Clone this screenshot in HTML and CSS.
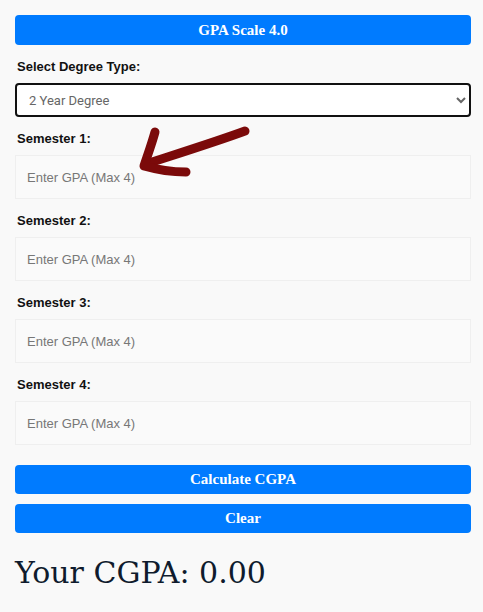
FILE: index.html
```html
<!DOCTYPE html>
<html lang="en">

<head>
    <meta charset="utf-8">
    <meta name="viewport" content="width=device-width, initial-scale=1.0">
    <title>CGPA Calculator</title>
    <link rel="stylesheet" href="styles.css">
</head>

<body>
    <div class="container">
        <button class="knap top">GPA Scale 4.0</button>

        <label class="label first" for="degree">Select Degree Type:</label>
        <select id="degree" class="degree">
            <option>2 Year Degree</option>
            <option>4 Year Degree</option>
        </select>

        <div class="semestre">
            <label class="label" for="s1">Semester 1:</label>
            <input id="s1" class="gpa" type="text" placeholder="Enter GPA (Max 4)">
            <svg class="pil" width="130" height="70" viewBox="0 0 130 70">
                <path d="M112 17 C 85 27, 50 38, 13 50" fill="none" stroke="#7b0a0a" stroke-width="9" stroke-linecap="round"/>
                <path d="M22 18 C 19 29, 15 40, 11 52 C 25 56, 38 58, 53 58" fill="none" stroke="#7b0a0a" stroke-width="9" stroke-linecap="round" stroke-linejoin="round"/>
            </svg>
        </div>
        <div class="semestre">
            <label class="label" for="s2">Semester 2:</label>
            <input id="s2" class="gpa" type="text" placeholder="Enter GPA (Max 4)">
        </div>
        <div class="semestre">
            <label class="label" for="s3">Semester 3:</label>
            <input id="s3" class="gpa" type="text" placeholder="Enter GPA (Max 4)">
        </div>
        <div class="semestre">
            <label class="label" for="s4">Semester 4:</label>
            <input id="s4" class="gpa" type="text" placeholder="Enter GPA (Max 4)">
        </div>

        <button class="knap beregn">Calculate CGPA</button>
        <button class="knap ryd">Clear</button>

        <h2 class="resultat">Your CGPA: 0.00</h2>
    </div>
</body></html>
```

FILE: styles.css
```css
body {
    margin: 0;
    background-color: #f9f9f9;
    font-family: 'Liberation Sans', Arial, sans-serif;
}

.container {
    padding: 15px 12px 15px 15px;
    display: flex;
    flex-direction: column;
}

.knap {
    display: block;
    width: 100%;
    height: 30px;
    border: none;
    border-radius: 4px;
    background-color: #007bff;
    color: white;
    font-family: 'Liberation Serif', Georgia, serif;
    font-weight: bold;
    font-size: 15px;
    padding: 0;
}

.label {
    display: block;
    font-weight: bold;
    font-size: 13px;
    line-height: 18px;
    color: #111;
    margin: 13px 2px 7px;
}

.label.first {
    margin-top: 13px;
    margin-bottom: 7px;
}

.degree {
    width: 100%;
    height: 34px;
    border: 2px solid #111;
    border-radius: 4px;
    background-color: white;
    font-family: Roboto, sans-serif;
    font-size: 13px;
    color: #666;
    padding: 0 8px;
}

.semestre {
    position: relative;
}

.gpa {
    display: block;
    box-sizing: border-box;
    width: 100%;
    height: 44px;
    border: 1px solid #efefef;
    background-color: #fafafa;
    font-family: 'Liberation Sans', Arial, sans-serif;
    font-size: 13px;
    padding: 0 11px;
}

.gpa::placeholder {
    color: #777;
}

.pil {
    position: absolute;
    left: 118px;
    top: -3px;
}

.beregn {
    margin-top: 20px;
    height: 29px;
}

.ryd {
    margin-top: 10px;
    height: 29px;
}

.resultat {
    font-family: 'DejaVu Serif', Georgia, serif;
    font-weight: normal;
    font-size: 30px;
    color: #0f1b2d;
    margin: 22px 0 0;
}
```
